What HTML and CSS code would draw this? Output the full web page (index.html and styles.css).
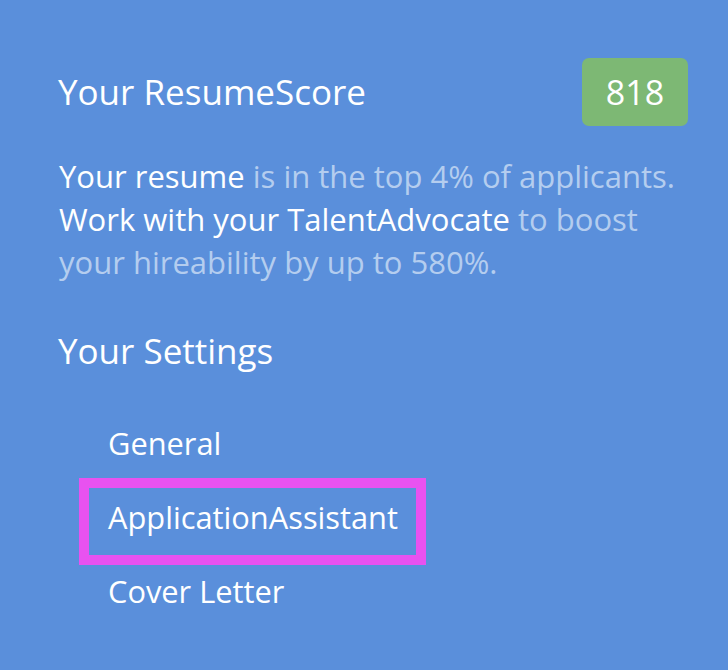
FILE: index.html
```html
<!DOCTYPE html>
<html lang="en">
<head>
<meta charset="utf-8">
<title>Your ResumeScore</title>
<link rel="stylesheet" href="styles.css">
</head>
<body>
<main class="panel">
  <header class="score-row">
    <h1 class="score-title">Your ResumeScore</h1>
    <span class="score-badge">818</span>
  </header>
  <p class="score-text"><span class="hl">Your resume</span> is in the top 4% of applicants. <span class="hl">Work with your TalentAdvocate</span> to boost your hireability by up to 580%.</p>
  <h2 class="settings-title">Your Settings</h2>
  <ul class="settings-list">
    <li class="settings-item">General</li>
    <li class="settings-item is-marked">ApplicationAssistant</li>
    <li class="settings-item">Cover Letter</li>
  </ul>
</main>
</body>
</html>
```
FILE: styles.css
```css
html, body {
  margin: 0;
  padding: 0;
}
body {
  background: #5a8fdb;
  font-family: "Open Sans", "Noto Sans", sans-serif;
  color: #ffffff;
  width: 728px;
  height: 670px;
  overflow: hidden;
}
.panel {
  padding: 58px 40px 0 58px;
}
.score-row {
  display: flex;
  align-items: center;
  justify-content: space-between;
  height: 68px;
}
.score-title {
  margin: 0;
  font-size: 35px;
  font-weight: 400;
  line-height: 48px;
}
.score-badge {
  display: flex;
  align-items: center;
  justify-content: center;
  width: 106px;
  height: 68px;
  border-radius: 7px;
  background: #7db874;
  font-size: 34px;
  font-weight: 500;
}
.score-text {
  margin: 29px 0 0 1px;
  font-size: 31px;
  line-height: 43px;
  color: #b4cdef;
}
.score-text .hl {
  color: #ffffff;
}
.settings-title {
  margin: 43px 0 0 0;
  font-size: 35px;
  font-weight: 400;
  line-height: 48px;
}
.settings-list {
  list-style: none;
  margin: 31px 0 0 0;
  padding: 0 0 0 50px;
}
.settings-item {
  font-size: 30.8px;
  line-height: 74px;
}
.is-marked {
  position: relative;
}
.is-marked::after {
  content: "";
  position: absolute;
  top: -2px;
  left: -29px;
  width: 347px;
  height: 87px;
  box-sizing: border-box;
  border: 10px solid #e852f0;
}
```
